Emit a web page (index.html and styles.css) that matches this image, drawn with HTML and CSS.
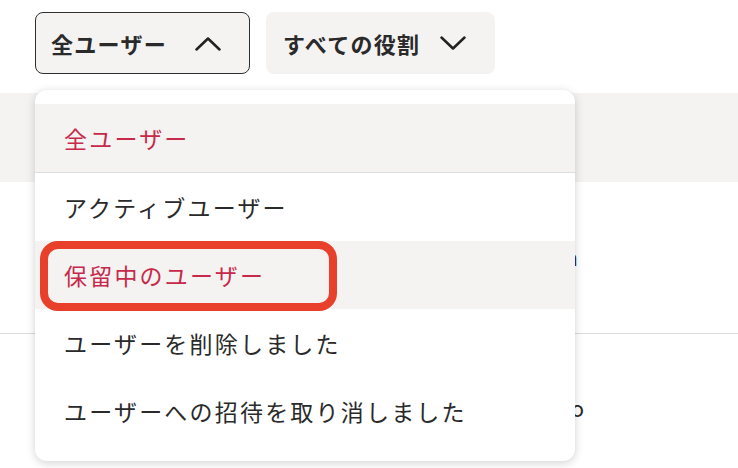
FILE: index.html
```html
<!DOCTYPE html>
<html lang="ja">
<head>
<meta charset="utf-8">
<link rel="stylesheet" href="styles.css">
</head>
<body>
<div class="page">
  <div class="toolbar">
    <button class="filter filter--open">
      <span>全ユーザー</span>
      <svg width="26" height="15" viewBox="0 0 26 15"><polyline points="1.5,13.5 13,2.5 24.5,13.5" fill="none" stroke="#222" stroke-width="2.5" stroke-linecap="round" stroke-linejoin="round"/></svg>
    </button>
    <button class="filter">
      <span>すべての役割</span>
      <svg width="26" height="15" viewBox="0 0 26 15"><polyline points="1.5,1.5 13,12.5 24.5,1.5" fill="none" stroke="#222" stroke-width="2.5" stroke-linecap="round" stroke-linejoin="round"/></svg>
    </button>
  </div>

  <div class="table">
    <div class="row row--head"><div class="cell"></div></div>
    <div class="row row--a"><div class="cell">Admin</div></div>
    <div class="row row--b"><div class="cell cell--b">Info</div></div>
  </div>

  <ul class="menu">
    <li class="item item--current">全ユーザー</li>
    <li class="item">アクティブユーザー</li>
    <li class="item item--hover">保留中のユーザー<span class="mark"></span></li>
    <li class="item">ユーザーを削除しました</li>
    <li class="item">ユーザーへの招待を取り消しました</li>
  </ul>
</div>
</body>
</html>
```

FILE: styles.css
```css
* { box-sizing: border-box; }
html, body { margin: 0; padding: 0; background: #fff; }
body {
  font-family: "Noto Sans CJK JP", "Noto Sans", sans-serif;
  color: #2a2a2a;
  width: 738px;
  height: 468px;
  overflow: hidden;
}
.page { position: relative; height: 468px; }

.toolbar {
  display: flex;
  gap: 16px;
  padding: 12px 0 0 35px;
}
.filter {
  display: flex;
  align-items: center;
  justify-content: space-between;
  height: 62px;
  padding: 0 28px 0 15px;
  border: 1px solid transparent;
  border-radius: 8px;
  background: #f4f3f2;
  font-family: inherit;
  font-size: 22px;
  font-weight: 700;
  letter-spacing: 1.3px;
  color: #2a2a2a;
}
.filter:first-child { width: 215px; }
.filter:last-child { width: 229px; padding-left: 16px; }
.filter--open { border-color: #2f2f2f; }
.filter svg { display: block; }

.table { margin-top: 19px; }
.row { display: flex; }
.row--head { height: 89px; background: #f4f3f2; }
.row--a {
  height: 152px;
  border-bottom: 1px solid #dcdcdc;
  align-items: flex-start;
  padding-top: 63px;
}
.row--b { height: 134px; align-items: flex-start; padding-top: 62px; }
.cell {
  width: 578px;
  text-align: right;
  font-size: 22px;
  color: #2a2a2a;
  line-height: 1;
}
.cell--b { width: 584px; }

.menu {
  position: absolute;
  left: 35px;
  top: 90px;
  width: 540px;
  margin: 0;
  padding: 14px 0 16px;
  list-style: none;
  background: #fff;
  border-radius: 12px;
  box-shadow: 0 2px 10px rgba(0, 0, 0, 0.18);
}
.item {
  position: relative;
  height: 68px;
  display: flex;
  align-items: center;
  padding-left: 29px;
  font-size: 23px;
  letter-spacing: 2.2px;
  color: #2a2a2a;
}
.item--current {
  background: #f4f3f2;
  color: #c62a4b;
  border-bottom: 1px solid #dddddd;
  height: 69px;
}
.item--hover { background: #f4f3f2; color: #c62a4b; }
.mark {
  position: absolute;
  left: 5px;
  top: 0;
  width: 297px;
  height: 70px;
  border: 8px solid #e8402a;
  border-radius: 18px;
}
```
